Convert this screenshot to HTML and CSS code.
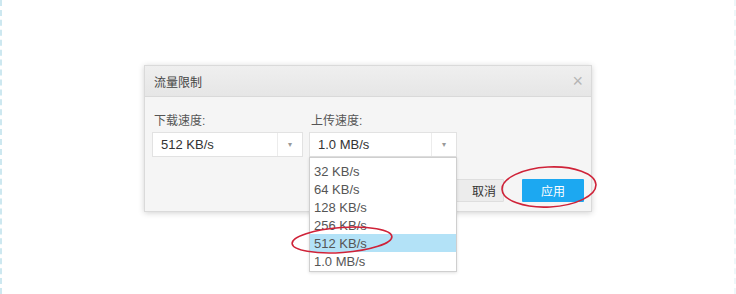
FILE: index.html
```html
<!DOCTYPE html>
<html lang="zh-CN">
<head>
    <meta charset="UTF-8">
    <meta name="viewport" content="width=device-width, initial-scale=1.0">
    <title>流量限制</title>
    <link rel="stylesheet" href="styles.css">
</head>
<body>
    <div class="page">
        <div class="dialog">
            <div class="dialog-header">
                <span class="dialog-title">流量限制</span>
                <span class="dialog-close">&times;</span>
            </div>
            <div class="dialog-body">
                <div class="field field-down">
                    <label>下载速度:</label>
                    <div class="select">
                        <span class="select-value">512 KB/s</span>
                        <span class="select-arrow">&#9662;</span>
                    </div>
                </div>
                <div class="field field-up">
                    <label>上传速度:</label>
                    <div class="select">
                        <span class="select-value">1.0 MB/s</span>
                        <span class="select-arrow">&#9662;</span>
                    </div>
                    <!-- open option list of the upload select -->
                    <ul class="options">
                        <li>32 KB/s</li>
                        <li>64 KB/s</li>
                        <li>128 KB/s</li>
                        <li>256 KB/s</li>
                        <li class="active">512 KB/s</li>
                        <li>1.0 MB/s</li>
                    </ul>
                </div>
            </div>
            <div class="dialog-footer">
                <button class="btn btn-cancel">取消</button>
                <button class="btn btn-apply">应用</button>
            </div>
        </div>

        <!-- red hand-drawn marks -->
        <svg class="marks" width="736" height="294" viewBox="0 0 736 294">
            <ellipse cx="549" cy="187" rx="47" ry="20" transform="rotate(-3 549 187)"/>
            <ellipse cx="342" cy="240" rx="50" ry="12.5" transform="rotate(-4 342 240)"/>
        </svg>
    </div>
</body>
</html>
```

FILE: styles.css
```css
body {
    margin: 0;
    background: #fff;
    font-family: 'Liberation Sans', 'Noto Sans CJK SC', sans-serif;
    color: #333;
}

.page {
    position: relative;
    height: 294px;
    box-sizing: border-box;
    padding-top: 65px;
    border-left: 2px dashed #cde8f0;
    border-right: 2px dashed #eef7f9;
    display: flex;
    justify-content: center;
    overflow: hidden;
}

.dialog {
    width: 448px;
    height: 147px;
    box-sizing: border-box;
    background: #f5f5f5;
    border: 1px solid #dadada;
    box-shadow: 0 1px 6px rgba(0, 0, 0, 0.18);
    display: flex;
    flex-direction: column;
}

.dialog-header {
    height: 30px;
    padding: 0 9px;
    display: flex;
    align-items: center;
    justify-content: space-between;
    background: linear-gradient(#efefef, #e6e6e6);
    border-bottom: 1px solid #d9d9d9;
}

.dialog-title {
    font-size: 12px;
    color: #444;
}

.dialog-close {
    font-size: 18px;
    font-weight: 300;
    color: #b5b5b5;
    line-height: 1;
    margin-right: -1px;
}

.dialog-body {
    display: flex;
    gap: 6px;
    padding: 16px 7px 0;
}

.field {
    position: relative;
    display: flex;
    flex-direction: column;
}

.field-down {
    width: 151px;
}

.field-up {
    width: 148px;
}

.field label {
    font-size: 12px;
    line-height: 16px;
    color: #555;
    padding-left: 2px;
    margin-bottom: 3px;
}

.select {
    height: 25px;
    box-sizing: border-box;
    background: #fff;
    border: 1px solid #e2e2e2;
    display: flex;
    align-items: center;
}

.select-value {
    flex: 1;
    padding-left: 8px;
    font-size: 13px;
    color: #333;
}

.select-arrow {
    width: 24px;
    height: 100%;
    border-left: 1px solid #ececec;
    display: flex;
    align-items: center;
    justify-content: center;
    font-size: 8px;
    color: #999;
}

.options {
    position: absolute;
    top: 44px;
    left: 0;
    width: 148px;
    box-sizing: border-box;
    margin: 0;
    padding: 4px 0 1px;
    list-style: none;
    background: #fff;
    border: 1px solid #cfcfcf;
    box-shadow: 0 1px 3px rgba(0, 0, 0, 0.12);
    z-index: 2;
}

.options li {
    height: 18px;
    line-height: 19px;
    padding-left: 4px;
    font-size: 13px;
    color: #555;
}

.options li.active {
    background: #b3e2f7;
}

.dialog-footer {
    margin-top: auto;
    padding: 0 7px 9px;
    display: flex;
    justify-content: flex-end;
    gap: 18px;
}

.btn {
    height: 23px;
    border: none;
    border-radius: 1px;
    font-family: inherit;
    font-size: 12px;
    white-space: nowrap;
    cursor: pointer;
}

.btn-cancel {
    width: 64px;
    padding: 0 0 0 31px;
    text-align: left;
    background: #ececec;
    border: 1px solid #dedede;
    color: #333;
}

.btn-apply {
    width: 62px;
    background: #1ca8f1;
    color: #fff;
}

.marks {
    position: absolute;
    top: 0;
    left: -2px;
    pointer-events: none;
    z-index: 3;
}

.marks ellipse {
    fill: none;
    stroke: #cf2238;
    stroke-width: 1.6;
}
```
